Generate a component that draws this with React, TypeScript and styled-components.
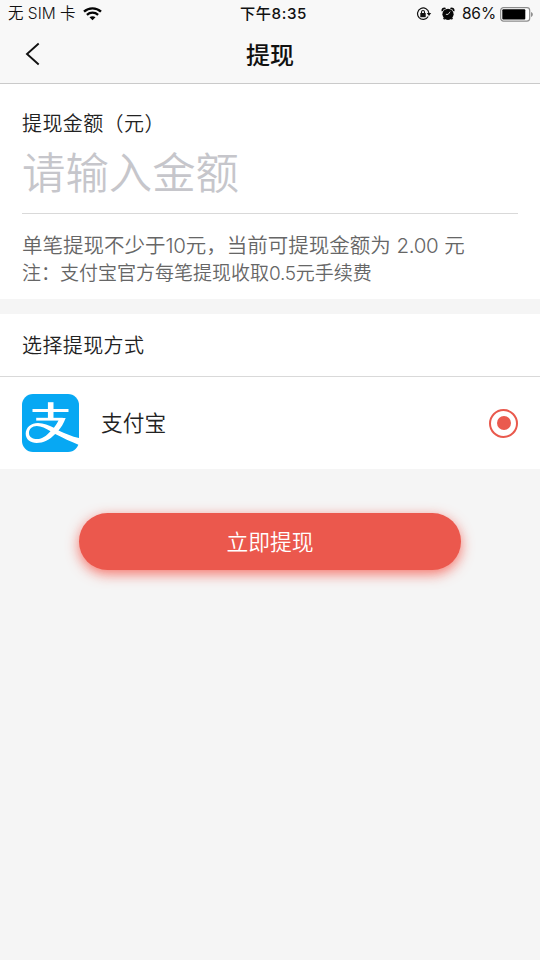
import React from 'react';
import styled, { createGlobalStyle } from 'styled-components';

const GlobalStyle = createGlobalStyle`
  * { box-sizing: border-box; }
  body {
    margin: 0;
    background: #f5f5f5;
    color: #222;
    font-family: Inter, "Noto Sans CJK SC", sans-serif;
    font-weight: 350;
  }
`;

const Screen = styled.main`
  width: 540px;
  height: 960px;
  overflow: hidden;
  background: #f5f5f5;
`;

const Header = styled.header`
  height: 84px;
  background: #f8f8f8;
  border-bottom: 1px solid #cacaca;
`;

const StatusBar = styled.div`
  display: grid;
  grid-template-columns: 1fr auto 1fr;
  align-items: center;
  height: 28px;
  padding: 0 6px 0 8px;
  color: #111;
  font-size: 15px;
  font-weight: 400;
  line-height: 28px;
`;

const StatusGroup = styled.div<{ $end?: boolean }>`
  display: flex;
  align-items: center;
  justify-content: ${({ $end }) => ($end ? 'flex-end' : 'flex-start')};
  svg { flex: none; }
`;

const Carrier = styled.span`
  margin-right: 7px;
  font-size: 15.5px;
  font-weight: 350;
  white-space: pre;
`;

const Clock = styled.time`
  margin-left: 5px;
  font-size: 15.2px;
  font-weight: 500;
  letter-spacing: 0.6px;
`;

const Percent = styled.span`
  margin: 0 4px 0 7px;
  font-size: 15.5px;
  letter-spacing: -0.1px;
`;

const NavBar = styled.nav`
  display: grid;
  grid-template-columns: 60px 1fr 60px;
  align-items: center;
  height: 55px;
`;

const BackButton = styled.button`
  display: flex;
  border: 0;
  padding: 0 0 3px 24px;
  background: none;
`;

const Title = styled.h1`
  margin: 0;
  color: #111;
  font-size: 24px;
  font-weight: 500;
  line-height: 52px;
  text-align: center;
`;

const AmountSection = styled.section`
  height: 215px;
  padding: 25px 22px 0;
  background: #fff;
`;

const Label = styled.div`
  font-size: 20px;
  letter-spacing: 0.4px;
  line-height: 30px;
`;

const AmountField = styled.div`
  height: 75px;
  border-bottom: 1px solid #d9d9d9;
  color: #c6c6cb;
  font-size: 43.4px;
  line-height: 68px;
`;

const Hint = styled.p<{ $small?: boolean }>`
  margin: 0;
  color: #666;
  font-size: ${({ $small }) => ($small ? '19px' : '20.5px')};
  line-height: ${({ $small }) => ($small ? '29px' : '27px')};
  white-space: nowrap;
`;

const Figure = styled.span`
  letter-spacing: -0.3px;
`;

const Hints = styled.div`
  padding-top: 18px;
`;

const MethodSection = styled.section`
  height: 155px;
  margin-top: 15px;
  background: #fff;
`;

const MethodHeading = styled.div`
  height: 63px;
  padding: 0 22px;
  border-bottom: 1px solid #d9d9d9;
  font-size: 20px;
  letter-spacing: 0.4px;
  line-height: 64px;
`;

const MethodRow = styled.div`
  display: flex;
  align-items: center;
  height: 92px;
  padding: 0 22px;
`;

const MethodName = styled.span`
  flex: 1;
  margin-left: 22px;
  font-size: 21.7px;
  line-height: 32px;
`;

const Radio = styled.span`
  display: grid;
  place-items: center;
  width: 29px;
  height: 29px;
  border: 2px solid #e9594d;
  border-radius: 50%;
  &::after {
    content: '';
    width: 14px;
    height: 14px;
    border-radius: 50%;
    background: #ea5a4e;
  }
`;

const SubmitButton = styled.button`
  display: block;
  width: 382px;
  height: 57px;
  margin: 44px auto 0 79px;
  padding: 0;
  border: 0;
  border-radius: 29px;
  background: #eb584d;
  box-shadow: 0 4px 13px rgba(245, 75, 62, 0.75);
  color: #fff;
  font-family: inherit;
  font-size: 21.8px;
  font-weight: 350;
  line-height: 58px;
`;

const WifiIcon = () => (
  <svg width="19" height="14" viewBox="0 0 19 14" fill="none" stroke="#050505">
    <path d="M1 4.7C5.8.3 13.2.3 18 4.7" strokeWidth="2.4" />
    <path d="M3.9 7.8c3.2-2.9 8-2.9 11.2 0" strokeWidth="2.3" />
    <path d="M9.5 13.2 6.5 10.3c1.7-1.5 4.3-1.5 6 0Z" fill="#050505" stroke="none" />
  </svg>
);

const RotationLockIcon = () => (
  <svg width="16" height="14" viewBox="0 0 16 14" fill="none" stroke="#111">
    <path d="M12.2 9.5A5.7 5.7 0 1 1 12.9 6" strokeWidth="1.2" />
    <path d="M10.8 6h4.4l-2.2 2.9Z" fill="#111" stroke="none" />
    <rect x="4.3" y="6" width="5.4" height="4.2" fill="#111" stroke="none" />
    <path d="M5.5 6.4V5a1.5 1.5 0 0 1 3 0v1.4" strokeWidth="1.1" />
  </svg>
);

const AlarmIcon = () => (
  <svg width="14" height="14" viewBox="0 0 14 14">
    <circle cx="7" cy="7.3" r="5.6" fill="#080808" />
    <path d="M1.5 4.1a2 2 0 0 1 3-2.4M12.5 4.1a2 2 0 0 0-3-2.4M3.4 11.3l-.7 1M10.6 11.3l.7 1" fill="none" stroke="#080808" strokeWidth="1.7" />
    <path d="M9.2 4.6 7.1 7.4H4.9" fill="none" stroke="#f8f8f8" strokeWidth="0.8" />
  </svg>
);

const BatteryIcon = () => (
  <svg width="34" height="15" viewBox="0 0 34 15">
    <rect x="0.7" y="0.7" width="29" height="13.4" rx="2.8" fill="#fff" stroke="#8c8c8c" strokeWidth="1.2" />
    <rect x="2.3" y="2.3" width="23" height="10.2" rx="1" fill="#000" />
    <path d="M31.2 5c2 .8 2 4 0 4.9Z" fill="#777" />
  </svg>
);

const BackIcon = () => (
  <svg width="17" height="24" viewBox="0 0 17 24" fill="none" stroke="#111" strokeWidth="1.9">
    <path d="M14.7 1.5 3 12l11.7 10.5" />
  </svg>
);

const AlipayIcon = () => (
  <svg width="57" height="58" viewBox="0 0 57 58">
    <rect width="57" height="58" rx="11" fill="#07a8f3" />
    <g fill="none" stroke="#fff">
      <path d="M10.5 16.6h36" strokeWidth="3" />
      <path d="M28.7 8.2v17" strokeWidth="5.6" />
      <path d="M14.2 25.2h26.6" strokeWidth="2.8" />
    </g>
    <path d="M37.5 24h6.2c-2 5.5-4.6 9.5-7.2 12.4C43 39.3 50 42.3 57 44.1v6.8c-8.4-3.3-16.3-7.1-23.8-10.9C27.5 46 21.2 49 14.7 49 8.4 49 3.7 45.5 3.7 39.8c0-6.4 5.4-10.8 12.3-10.8 5.7 0 10.8 2.2 15.9 4.7 2.3-2.7 4.2-5.9 5.6-9.7ZM28.5 37.3c-4.8-2.7-9.2-5.2-13.7-5.2-4.7 0-7.8 3-7.8 6.8 0 4 3.6 6.2 8.2 6.2 4.9 0 9.5-3.4 13.3-7.8Z" fill="#fff" fillRule="evenodd" />
  </svg>
);

export default function App() {
  return (
    <>
      <GlobalStyle />
      <Screen lang="zh-CN">
        <Header>
          <StatusBar>
            <StatusGroup><Carrier>无 SIM 卡</Carrier><WifiIcon /></StatusGroup>
            <Clock>下午8:35</Clock>
            <StatusGroup $end>
              <RotationLockIcon />
              <span>&nbsp;&nbsp;</span><AlarmIcon />
              <Percent>86%</Percent>
              <BatteryIcon />
            </StatusGroup>
          </StatusBar>
          <NavBar>
            <BackButton aria-label="返回"><BackIcon /></BackButton>
            <Title>提现</Title>
          </NavBar>
        </Header>
        <AmountSection>
          <Label>提现金额（元）</Label>
          <AmountField>请输入金额</AmountField>
          <Hints>
            <Hint>单笔提现不少于<Figure>10</Figure>元，当前可提现金额为 <Figure>2.00</Figure> 元</Hint>
            <Hint $small>注：支付宝官方每笔提现收取<Figure>0.5</Figure>元手续费</Hint>
          </Hints>
        </AmountSection>
        <MethodSection>
          <MethodHeading>选择提现方式</MethodHeading>
          <MethodRow>
            <AlipayIcon />
            <MethodName>支付宝</MethodName>
            <Radio role="radio" aria-checked="true" aria-label="支付宝" />
          </MethodRow>
        </MethodSection>
        <SubmitButton>立即提现</SubmitButton>
      </Screen>
    </>
  );
}
